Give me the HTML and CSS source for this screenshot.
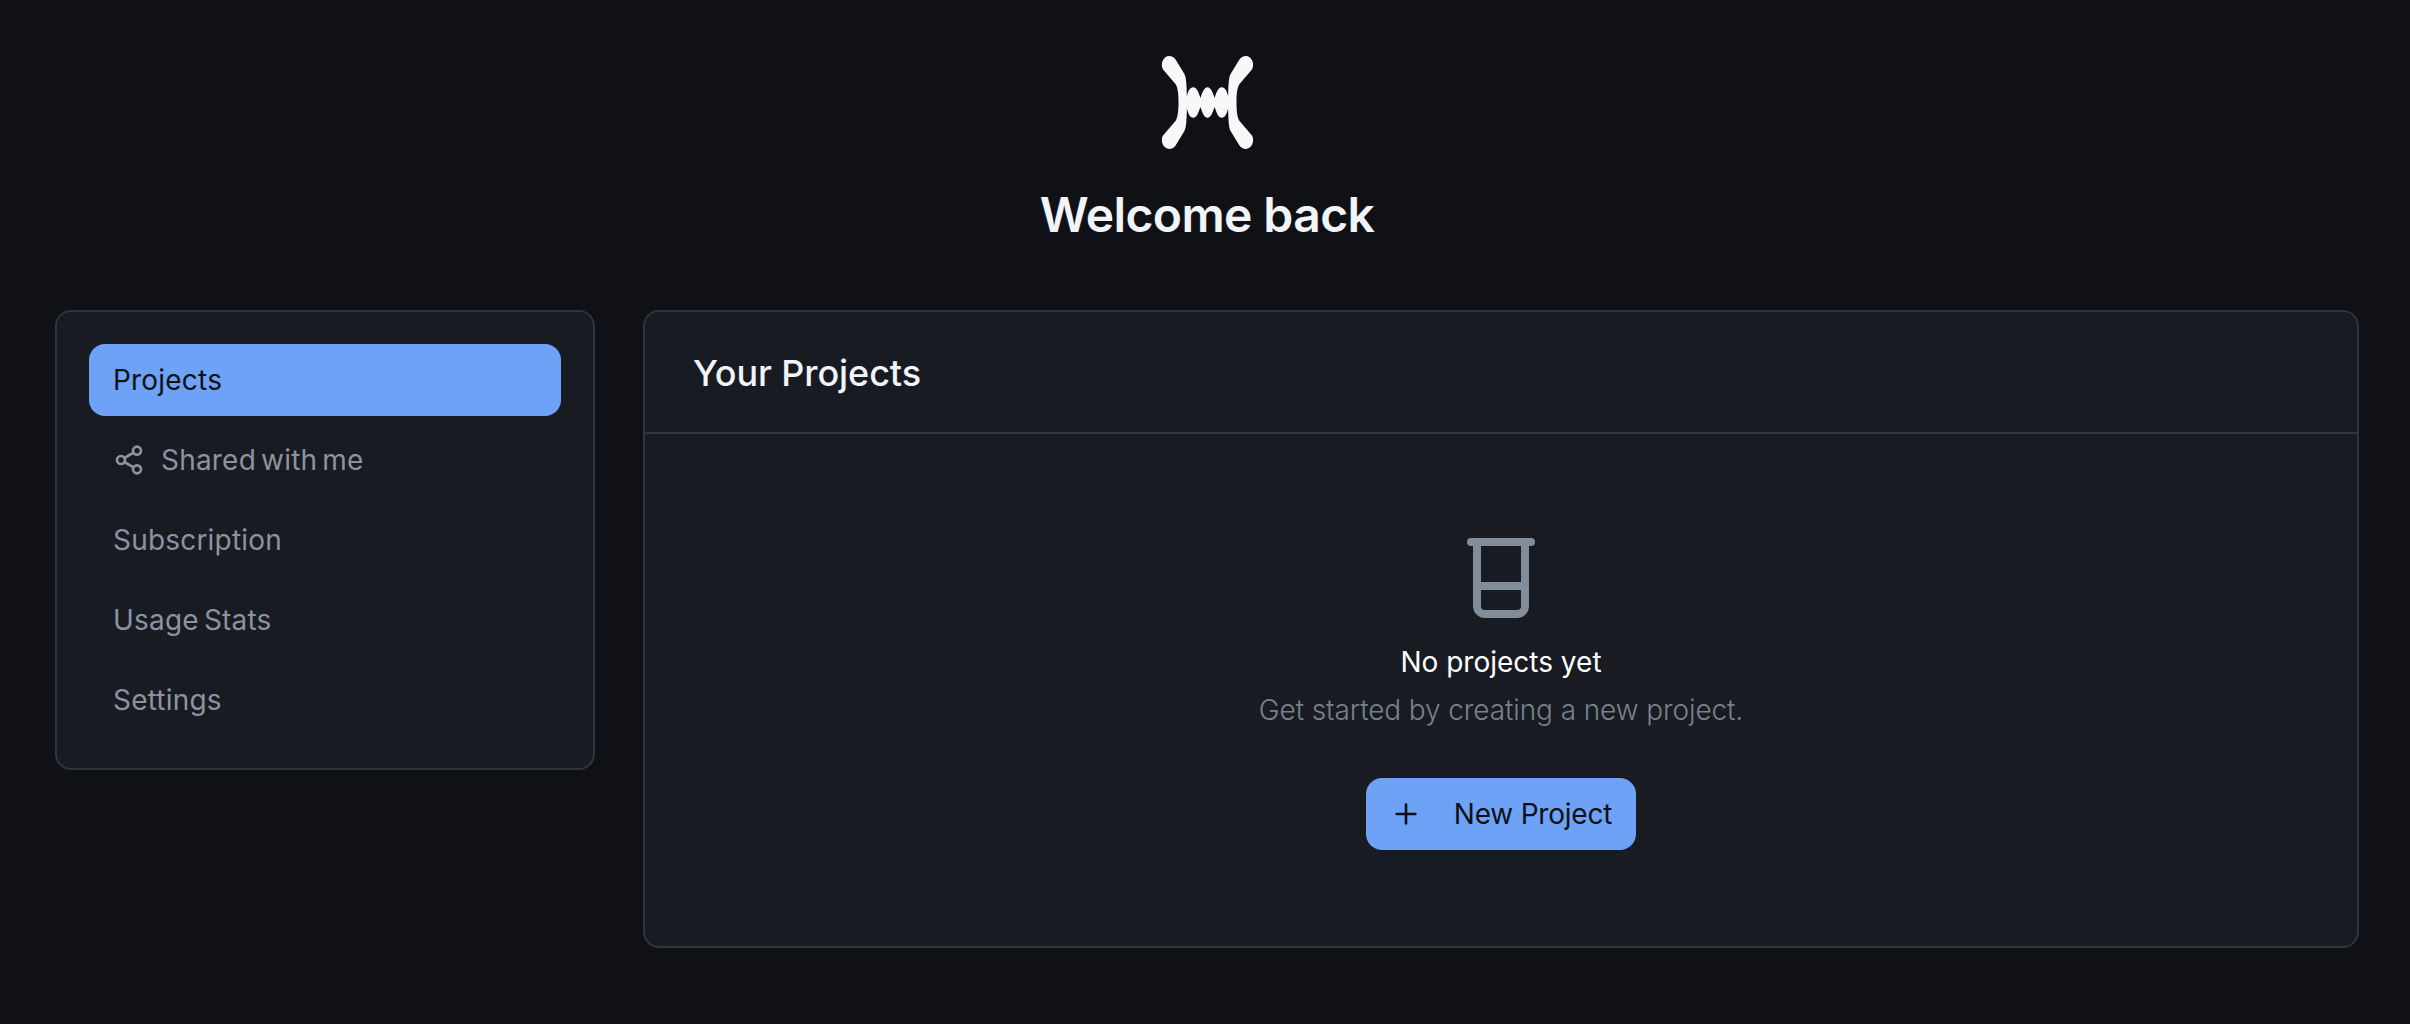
FILE: index.html
```html
<!DOCTYPE html>
<html lang="en">
<head>
    <meta charset="UTF-8">
    <meta name="viewport" content="width=device-width, initial-scale=1.0">
    <title>Welcome back</title>
    <link rel="stylesheet" href="styles.css">
</head>
<body>
    <div class="page-head">
        <svg class="logo" viewBox="0 0 96 96" aria-hidden="true">
            <path d="M3.8 15C1 9.5 4.5 2 10 2C13 2 15.5 3.6 17 6.5L25 19.5C27 23 27.3 30 27.6 42C29 36.5 30.5 33 34 33C37.5 33 39 38 41 43.5C43 38 44.5 33 48 33C51.5 33 53 38 55 43.5C57 38 58.5 33 62 33C65.5 33 67 36.5 68.4 42C68.7 30 69 23 71 19.5L79 6.5C80.5 3.6 83 2 86 2C91.5 2 95 9.5 92.2 15L79.5 30C77 34 76.7 42 76.7 48C76.7 54 77 62 79.5 66L92.2 81C95 86.5 91.5 94 86 94C83 94 80.5 92.4 79 89.5L71 76.5C69 73 68.7 66 68.4 54C67 59.5 65.5 63 62 63C58.5 63 57 58 55 52.5C53 58 51.5 63 48 63C44.5 63 43 58 41 52.5C39 58 37.5 63 34 63C30.5 63 29 59.5 27.6 54C27.3 66 27 73 25 76.5L17 89.5C15.5 92.4 13 94 10 94C4.5 94 1 86.5 3.8 81L16.5 66C19 62 19.3 54 19.3 48C19.3 42 19 34 16.5 30Z"/>
        </svg>
        <h1 class="welcome">Welcome back</h1>
    </div>

    <div class="layout">
        <nav class="card sidebar">
            <a class="nav-item active">Projects</a>
            <a class="nav-item">
                <svg class="nav-icon" viewBox="0 0 24 24" fill="none" stroke="currentColor" stroke-width="2" stroke-linecap="round" stroke-linejoin="round" aria-hidden="true">
                    <circle cx="18" cy="5" r="3"/>
                    <circle cx="6" cy="12" r="3"/>
                    <circle cx="18" cy="19" r="3"/>
                    <path d="M8.59 13.51l6.83 3.98M15.41 6.51l-6.82 3.98"/>
                </svg>
                Shared with me
            </a>
            <a class="nav-item">Subscription</a>
            <a class="nav-item">Usage Stats</a>
            <a class="nav-item">Settings</a>
        </nav>

        <main class="card projects">
            <div class="projects-head">
                <h2 class="projects-title">Your Projects</h2>
            </div>
            <div class="empty">
                <svg class="empty-icon" viewBox="0 0 24 24" fill="none" stroke="currentColor" stroke-width="2" stroke-linecap="round" stroke-linejoin="round" aria-hidden="true">
                    <path d="M4.5 3h15M6 3v16a2 2 0 0 0 2 2h8a2 2 0 0 0 2-2V3M6 14h12"/>
                </svg>
                <div class="empty-title">No projects yet</div>
                <div class="empty-text">Get started by creating a new project.</div>
                <button class="new-btn">
                    <svg class="new-icon" viewBox="0 0 24 24" fill="none" stroke="currentColor" stroke-width="2" stroke-linecap="round" aria-hidden="true">
                        <path d="M12 5v14M5 12h14"/>
                    </svg>
                    New Project
                </button>
            </div>
        </main>
    </div>
</body>
</html>
```

FILE: styles.css
```css
* { box-sizing: border-box; }
body {
    background-color: #0f1116;
    color: #f1f4f9;
    font-family: 'Inter', sans-serif;
    margin: 0;
    padding: 54px 51px 0 55px;
    height: 1024px;
    overflow: hidden;
}
.page-head {
    display: flex;
    flex-direction: column;
    align-items: center;
}
.logo { width: 97px; height: 97px; fill: #f8f8f8; display: block; }
.welcome {
    font-size: 48px;
    line-height: 64px;
    font-weight: 600;
    letter-spacing: -0.6px;
    margin: 32px 0 63px;
}
.layout {
    display: flex;
    align-items: flex-start;
    gap: 48px;
}
.card {
    background-color: #181b22;
    border: 2px solid #30343b;
    border-radius: 16px;
}
.sidebar {
    width: 540px;
    flex-shrink: 0;
    padding: 32px;
    display: flex;
    flex-direction: column;
    gap: 8px;
}
.nav-item {
    display: flex;
    align-items: center;
    gap: 16px;
    height: 72px;
    padding: 0 24px;
    border-radius: 16px;
    font-size: 28px;
    letter-spacing: 0.2px;
    word-spacing: -3px;
    color: #8a94a0;
    cursor: pointer;
}
.nav-item.active { background-color: #6da2f7; color: #0f1116; }
.nav-icon { width: 32px; height: 32px; }
.projects { flex: 1; }
.projects-head {
    padding: 41px 48px 39px;
    border-bottom: 2px solid #30343b;
}
.projects-title {
    font-size: 36px;
    line-height: 40px;
    font-weight: 500;
    letter-spacing: -0.1px;
    margin: 0;
}
.empty {
    display: flex;
    flex-direction: column;
    align-items: center;
    padding: 96px 0;
}
.empty-icon { width: 96px; height: 96px; color: #838d99; margin-bottom: 16px; }
.empty-title {
    font-size: 28px;
    line-height: 40px;
    font-weight: 400;
    color: #fff;
    margin-bottom: 8px;
}
.empty-text {
    font-size: 28px;
    line-height: 40px;
    font-weight: 300;
    letter-spacing: -0.1px;
    color: #78818d;
    margin-bottom: 48px;
}
.new-btn {
    display: flex;
    align-items: center;
    gap: 32px;
    height: 72px;
    padding: 0 24px;
    border: none;
    border-radius: 16px;
    background-color: #6da2f7;
    color: #0f1116;
    font-family: inherit;
    font-size: 28px;
    font-weight: 400;
    letter-spacing: -0.2px;
    cursor: pointer;
}
.new-icon { width: 32px; height: 32px; }
```
